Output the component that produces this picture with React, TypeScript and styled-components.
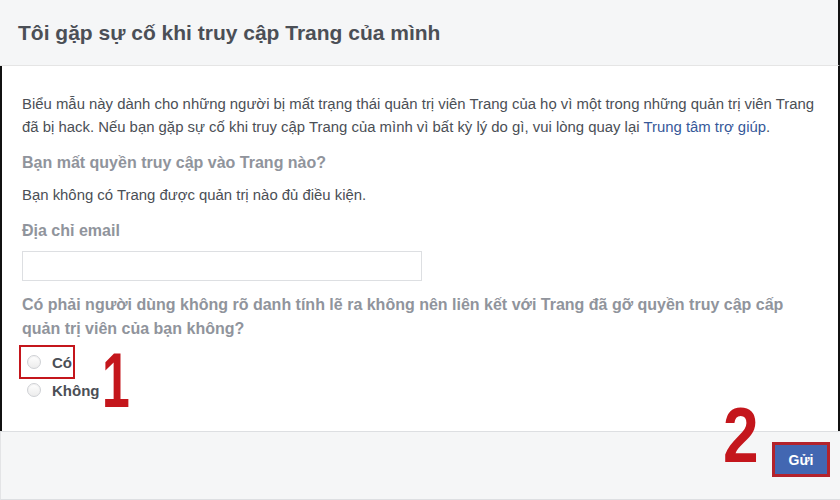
import React from 'react'
import styled, { createGlobalStyle } from 'styled-components'

const GlobalStyle = createGlobalStyle`
  html, body {
    margin: 0;
    padding: 0;
    background: #ffffff;
  }
  body {
    font-family: 'Liberation Sans', Arial, Helvetica, sans-serif;
    color: #4b4f56;
  }
`

const Page = styled.div`
  width: 840px;
  height: 500px;
  display: flex;
  flex-direction: column;
  overflow: hidden;
  background: #ffffff;
`

const Header = styled.header`
  height: 66px;
  flex-shrink: 0;
  box-sizing: border-box;
  display: flex;
  align-items: center;
  padding: 0 18px;
  background: #f5f6f7;
  border-bottom: 1px solid #e5e5e5;
  border-right: 2px solid #111;
`

const Title = styled.h1`
  margin: 0;
  font-size: 21px;
  font-weight: bold;
  color: #4b4f56;
`

const Body = styled.section`
  position: relative;
  flex-shrink: 0;
  box-sizing: border-box;
  height: 365px;
  padding: 27px 20px 0 20px;
  border-left: 2px solid #111;
  border-right: 2px solid #111;
`

const Intro = styled.p`
  margin: 0;
  font-size: 14.9px;
  line-height: 23px;
  color: #4b4f56;
  white-space: nowrap;
`

const HelpLink = styled.a`
  color: #365899;
  text-decoration: none;
`

const SectionHeading = styled.div<{ $top: number }>`
  margin-top: ${(p) => p.$top}px;
  font-size: 16px;
  line-height: 20px;
  font-weight: bold;
  color: #90949c;
`

const Question = styled.div`
  margin-top: 12px;
  font-size: 16px;
  line-height: 24px;
  font-weight: bold;
  color: #90949c;
`

const Note = styled.div`
  margin-top: 12px;
  font-size: 14.9px;
  line-height: 20px;
  color: #4b4f56;
`

const EmailInput = styled.input`
  display: block;
  margin-top: 10px;
  width: 400px;
  height: 30px;
  box-sizing: border-box;
  border: 1px solid #dddfe2;
  background: #fff;
  outline: none;
`

const Options = styled.div`
  margin-top: 7px;
  display: flex;
  flex-direction: column;
  align-items: flex-start;
`

const Option = styled.label<{ $marked?: boolean }>`
  height: 28px;
  display: inline-flex;
  align-items: center;
  gap: 11px;
  padding-left: 5px;
  font-size: 15px;
  font-weight: bold;
  color: #4b4f56;
  outline: ${(p) => (p.$marked ? '2px solid #c4161c' : 'none')};
  outline-offset: 1px;
`

const Radio = styled.span`
  width: 14px;
  height: 14px;
  border-radius: 50%;
  box-sizing: border-box;
  border: 1px solid #cfd1d5;
  background: linear-gradient(#ffffff, #ececec);
  box-shadow: inset 0 1px 1px rgba(0, 0, 0, 0.06);
`

const Marker = styled.span<{ $squeeze: number }>`
  position: absolute;
  font-family: 'Liberation Sans', sans-serif;
  font-weight: bold;
  font-size: 78px;
  line-height: 1;
  color: #c4161c;
  transform: scaleX(${(p) => p.$squeeze});
  transform-origin: left top;
`

const Footer = styled.footer`
  position: relative;
  flex: 1;
  display: flex;
  justify-content: flex-end;
  align-items: flex-start;
  padding: 10px 10px 0 0;
  background: #f5f6f7;
  border-top: 1px solid #dddfe2;
  border-bottom: 1px solid #dddfe2;
  border-left: 1px solid #e3e4e6;
`

const SubmitButton = styled.button`
  width: 58px;
  height: 35px;
  box-sizing: border-box;
  border: 3px solid #b3232c;
  background: #4267b2;
  color: #ffffff;
  font-family: 'Liberation Sans', Arial, sans-serif;
  font-weight: bold;
  font-size: 14px;
  padding: 0;
  cursor: pointer;
`

export default function App() {
  return (
    <Page>
      <GlobalStyle />
      <Header>
        <Title>Tôi gặp sự cố khi truy cập Trang của mình</Title>
      </Header>
      <Body>
        <Intro>
          Biểu mẫu này dành cho những người bị mất trạng thái quản trị viên Trang của họ vì một trong những quản trị viên Trang
          <br />
          đã bị hack. Nếu bạn gặp sự cố khi truy cập Trang của mình vì bất kỳ lý do gì, vui lòng quay lại{' '}
          <HelpLink href="#">Trung tâm trợ giúp</HelpLink>.
        </Intro>
        <SectionHeading $top={14}>Bạn mất quyền truy cập vào Trang nào?</SectionHeading>
        <Note>Bạn không có Trang được quản trị nào đủ điều kiện.</Note>
        <SectionHeading $top={16}>Địa chỉ email</SectionHeading>
        <EmailInput type="text" />
        <Question>
          Có phải người dùng không rõ danh tính lẽ ra không nên liên kết với Trang đã gỡ quyền truy cập cấp
          <br />
          quản trị viên của bạn không?
        </Question>
        <Options>
          <Option $marked>
            <Radio />
            Có
          </Option>
          <Option>
            <Radio />
            Không
          </Option>
        </Options>
        <Marker $squeeze={0.64} style={{ left: 100, top: 275 }}>1</Marker>
      </Body>
      <Footer>
        <Marker $squeeze={0.82} style={{ left: 722, top: -36 }}>2</Marker>
        <SubmitButton>Gửi</SubmitButton>
      </Footer>
    </Page>
  )
}
